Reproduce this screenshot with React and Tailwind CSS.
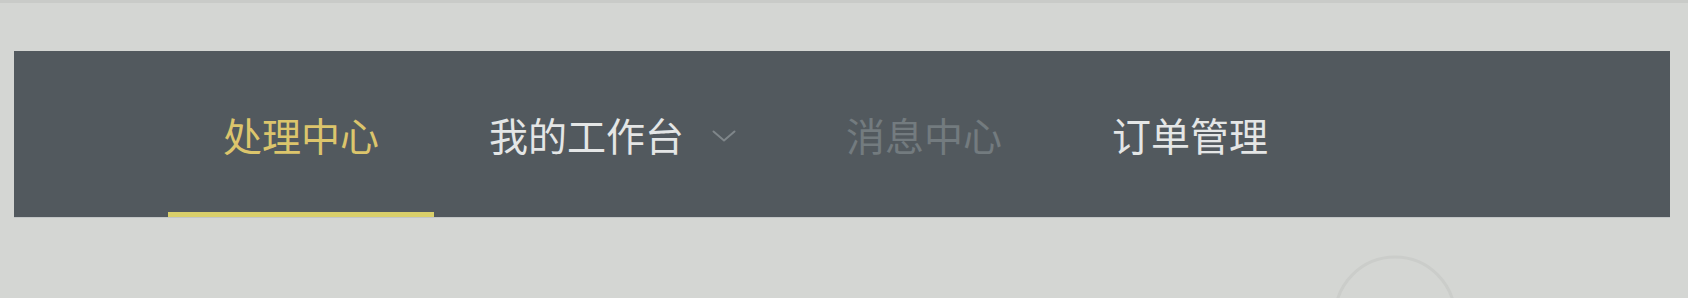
const NAV = [
  { label: '处理中心', state: 'active' },
  { label: '我的工作台', state: 'normal', dropdown: true },
  { label: '消息中心', state: 'disabled' },
  { label: '订单管理', state: 'normal' }
]

const TEXT = {
  active: 'text-[#dcc56c]',
  normal: 'text-[#e4e6e6]',
  disabled: 'text-[#737b7f]'
}

function Chevron() {
  return (
    <svg width="24" height="12" viewBox="0 0 24 12" fill="none" className="ml-[28px] mt-[4px]">
      <path d="M1.5 1.5 L12 10.5 L22.5 1.5" stroke="#7f868a" strokeWidth="2" strokeLinecap="round" strokeLinejoin="round" />
    </svg>
  )
}

export default function App() {
  return (
    <div className="relative h-[298px] w-full overflow-hidden bg-[#d4d6d3] border-t-[3px] border-[#c9cbc8] font-['Noto_Sans_CJK_SC','Noto_Sans',sans-serif]">
      {/* faint decoration under the bar */}
      <svg width="140" height="80" viewBox="0 0 140 80" fill="none" className="absolute left-[1325px] top-[248px]">
        <circle cx="70" cy="66" r="60" stroke="#cbcdca" strokeWidth="3" />
      </svg>

      <div className="relative pt-[48px] pl-[14px] pr-[18px]">
        <nav className="flex h-[166px] items-stretch bg-[#52595e] pl-[154px] shadow-[0_1px_0_#c2c5c6]">
          {NAV.map(item => (
            <div key={item.label} className="relative flex items-center px-[55px]">
              <span className={`text-[39px] leading-none ${TEXT[item.state]}`}>{item.label}</span>
              {item.dropdown && <Chevron />}
              {item.state === 'active' && (
                <div className="absolute bottom-0 left-0 right-0 h-[5px] bg-[#d9cf6a]" />
              )}
            </div>
          ))}
        </nav>
      </div>
    </div>
  )
}
